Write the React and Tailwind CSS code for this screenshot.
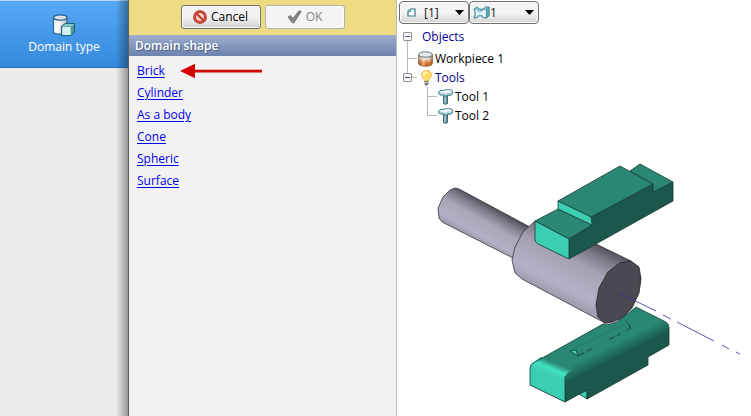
import React from "react";

const shapes = ["Brick", "Cylinder", "As a body", "Cone", "Spheric", "Surface"];

function DomainIcon() {
  return (
    <svg width="24" height="24" viewBox="0 0 24 24" aria-hidden="true">
      <defs>
        <linearGradient id="dcyl">
          <stop offset="0" stopColor="#fff" />
          <stop offset="0.5" stopColor="#f0f0f0" />
          <stop offset="1" stopColor="#b9b9b9" />
        </linearGradient>
      </defs>
      <path d="M1.5 4.5v14c0 3.500 13.500 3.500 13.500 0v-14z" fill="url(#dcyl)" stroke="#226c99" strokeWidth="1.200" />
      <ellipse cx="8.200" cy="4.500" rx="6.700" ry="2.600" fill="#dedede" stroke="#1d6594" strokeWidth="1.200" />
      <path d="M9.500 13.500l4-3h9v8.500l-3.500 3.500h-9.500z" fill="#d5eef0" stroke="#186276" strokeWidth="1.200" />
      <path d="M10 13.500l3.500-2.500h8.500l-3 2.500z" fill="#8ac9cb" />
      <path d="M19 13.500l3-2.500v8l-3 3z" fill="#4d9aa0" />
      <path d="M10 13.500h9v8" fill="none" stroke="#5aa5a8" strokeWidth="0.800" />
    </svg>
  );
}

function ForbidIcon() {
  return (
    <svg width="14" height="14" viewBox="0 0 14 14" aria-hidden="true">
      <circle cx="7" cy="7" r="5.400" fill="#f5d8d0" stroke="#8f2317" strokeWidth="2.800" />
      <circle cx="7" cy="7" r="5.400" fill="none" stroke="#d94c35" strokeWidth="1.800" />
      <path d="M3.200 3.200l7.600 7.600" stroke="#c83a27" strokeWidth="2.200" />
    </svg>
  );
}

function CheckIcon() {
  return (
    <svg width="15" height="14" viewBox="0 0 15 14" aria-hidden="true">
      <path d="M1 7l2.500-1.500 2.500 3L12 .8l2.200.6L6.800 13H5.500z" fill="#858585" stroke="#686868" strokeWidth="0.800" strokeLinejoin="round" />
    </svg>
  );
}

function SheetIcon() {
  return (
    <svg width="9" height="9" viewBox="0 0 9 9" aria-hidden="true">
      <path d="M1 3.500L3.500 1H8v7H1z" fill="#fff" stroke="#36788e" strokeWidth="1.200" />
      <path d="M1 3.800h2.700V1" fill="#a9d4de" stroke="#36788e" strokeWidth="0.700" />
    </svg>
  );
}

function SurfaceIcon() {
  return (
    <svg width="17" height="13" viewBox="0 0 17 13" aria-hidden="true">
      <path d="M4 1c2 3 6 3 8.500 0H16v8.500L13.500 12H10.500C9 9 5 9 3.500 12H1C2.500 9 2.500 6 1 3z" fill="#9bd0da" stroke="#3a8296" strokeLinejoin="round" />
      <path d="M1 3.300h2.500c2 2.700 5 2.700 7.500 0h2.500v8.200h-2.700c-2-3-5.500-3-7.500 0H1.500C3 9 3 6 1 3.300z" fill="#e4f5f8" stroke="#4b95a7" strokeWidth="0.800" />
      <path d="M13.500 3.300L16 1v8.500L13.500 12z" fill="#64a7b6" stroke="#3a8296" strokeWidth="0.600" />
    </svg>
  );
}

function WorkpieceIcon() {
  return (
    <svg width="15" height="16" viewBox="0 0 15 16" aria-hidden="true">
      <defs>
        <linearGradient id="wp" x2="0" y2="1">
          <stop offset="0.150" stopColor="#d8d2cd" />
          <stop offset="0.350" stopColor="#f1e3d8" />
          <stop offset="0.680" stopColor="#e2731c" />
          <stop offset="1" stopColor="#b94a06" />
        </linearGradient>
        <linearGradient id="wpShade">
          <stop offset="0" stopColor="#5e3019" stopOpacity="0.350" />
          <stop offset="0.350" stopColor="#fff" stopOpacity="0.450" />
          <stop offset="0.600" stopColor="#fff" stopOpacity="0" />
          <stop offset="1" stopColor="#5e3019" stopOpacity="0.600" />
        </linearGradient>
      </defs>
      <path d="M.7 3.500v9c0 3.700 13.600 3.700 13.600 0v-9z" fill="url(#wp)" stroke="#8d5535" strokeWidth="0.800" />
      <path d="M.7 3.500v9c0 3.700 13.600 3.700 13.600 0v-9z" fill="url(#wpShade)" />
      <ellipse cx="7.500" cy="3.500" rx="6.800" ry="2.700" fill="#e5e8e8" stroke="#547078" strokeWidth="0.900" />
    </svg>
  );
}

function BulbIcon() {
  return (
    <svg width="11" height="16" viewBox="0 0 11 16" aria-hidden="true">
      <path d="M3.500 11c0-2.300-3-3.300-3-6.200C.5 2.200 2.600.5 5.500.5s5 1.700 5 4.300c0 2.900-3 3.900-3 6.200z" fill="#ffdc68" stroke="#e3a938" strokeWidth="0.800" />
      <path d="M2.800 6c-.7-2 .3-4 2.600-4" stroke="#fff8d0" strokeWidth="1.800" fill="none" />
      <path d="M3.500 11h4v3l-1 1.500h-2l-1-1.500z" fill="#777" />
      <path d="M3.500 12.500h4" stroke="#ddd" strokeWidth="0.800" />
    </svg>
  );
}

function HammerIcon() {
  return (
    <svg width="15" height="16" viewBox="0 0 15 16" aria-hidden="true">
      <path d="M5.500 5h4v9.500c-1 1-3 1-4 0z" fill="#6e8f9a" stroke="#2e5f71" strokeWidth="0.900" />
      <path d="M7 7v7" stroke="#d1e2e6" />
      <path d="M.7 2.700L3 1.300l2 .5 2-1h6l1.300 1V5l-1.800 1.300H9.500L8.500 7H6L5 6H2L.7 5z" fill="#d5e9ed" stroke="#39788a" strokeLinejoin="round" />
      <path d="M1.500 2.800L3.200 2l2 .5 2-1h5.500l.8.700-1.500.9H9L7 4 5 3.300z" fill="#fff" />
      <path d="M1.500 5h3.700l1.300 1h2l1-.8h2.600l1.400-.8" stroke="#679daa" strokeWidth="0.800" fill="none" />
    </svg>
  );
}

function Combo({ label, value, icon, inset, iconInset }) {
  return (
    <div className="grid h-[23px] w-[70px] grid-cols-1 items-center rounded-sm border border-[#707070] bg-gradient-to-b from-[#f3f3f3] from-50% to-[#d5d5d5] shadow-[inset_0_0_0_1px_#fafafa]">
      <select aria-label={label} className={`col-start-1 row-start-1 h-[21px] w-full appearance-none bg-transparent ${inset} text-xs text-[#171717] outline-none`}>
        <option>{value}</option>
      </select>
      <span className={`pointer-events-none col-start-1 row-start-1 flex items-center justify-between pr-1 ${iconInset}`}>
        {icon}
        <svg width="9" height="5" viewBox="0 0 9 5" aria-hidden="true"><path d="M0 0h9L4.500 5z" fill="#000" /></svg>
      </span>
    </div>
  );
}

function Expander({ last }) {
  return (
    <svg width="14" height={last ? 19 : 25} viewBox={last ? "0 0 14 19" : "0 0 14 25"} className="shrink-0" aria-hidden="true">
      <path d={last ? "M4.500 0v5M9 9.500h5" : "M4.500 17v8"} stroke="#b8b8b8" fill="none" />
      <rect x="0.500" y={last ? 5.500 : 8.500} width="8" height="8" rx="0.500" fill="#f7f7f7" stroke="#929292" />
      <path d={last ? "M2 9.500h5" : "M2 12.500h5"} stroke="#315792" />
    </svg>
  );
}

function ObjectTree() {
  return (
    <ul className="pl-1.5 text-xs text-black">
      <li>
        <div className="flex h-[25px] items-center text-[#000095]"><Expander /><span className="pl-[5px]">Objects</span></div>
        <ul>
          <li className="flex h-[19px] items-center">
            <svg width="15" height="19" viewBox="0 0 15 19" aria-hidden="true"><path d="M4.500 0v19M5 9.500h9" stroke="#b8b8b8" /></svg>
            <WorkpieceIcon /><span className="pl-0.5">Workpiece 1</span>
          </li>
          <li>
            <div className="flex h-[19px] items-center text-[#000095]">
              <Expander last />
              <span className="flex w-[18px] justify-center"><BulbIcon /></span>
              <span>Tools</span>
            </div>
            <ul>
              {["Tool 1", "Tool 2"].map((name, i) => (
                <li key={name} className="flex h-[19px] items-center pl-6">
                  <svg width="11" height="19" viewBox="0 0 11 19" aria-hidden="true">
                    <path d={i === 0 ? "M.5 0v19M1 9.500h9" : "M.5 0v9.500h9.500"} stroke="#b8b8b8" fill="none" />
                  </svg>
                  <HammerIcon /><span className="pl-0.5">{name}</span>
                </li>
              ))}
            </ul>
          </li>
        </ul>
      </li>
    </ul>
  );
}

function Scene() {
  return (
    <svg viewBox="397 125 354 291" className="block w-full" role="img" aria-label="Workpiece between two tools">
      <defs>
        <linearGradient id="shaft" gradientUnits="userSpaceOnUse" x1="495" y1="208" x2="477" y2="240">
          <stop offset="0" stopColor="#504c57" />
          <stop offset="0.200" stopColor="#807b89" />
          <stop offset="0.450" stopColor="#aaa5b7" />
          <stop offset="0.850" stopColor="#b4afc4" />
          <stop offset="1" stopColor="#9f9aac" />
        </linearGradient>
        <linearGradient id="drum" gradientUnits="userSpaceOnUse" x1="595" y1="242" x2="565" y2="302">
          <stop offset="0" stopColor="#504c57" />
          <stop offset="0.180" stopColor="#807b89" />
          <stop offset="0.400" stopColor="#a6a1b3" />
          <stop offset="0.800" stopColor="#b5b0c6" />
          <stop offset="1" stopColor="#9f9aac" />
        </linearGradient>
        <linearGradient id="block" gradientUnits="userSpaceOnUse" x1="561" y1="371" x2="567" y2="383">
          <stop offset="0" stopColor="#298773" />
          <stop offset="1" stopColor="#1b584b" />
        </linearGradient>
        <linearGradient id="round" gradientUnits="userSpaceOnUse" x1="555" y1="363" x2="550" y2="375">
          <stop offset="0" stopColor="#298773" />
          <stop offset="0.500" stopColor="#40e3c0" />
          <stop offset="1" stopColor="#3bceb0" />
        </linearGradient>
      </defs>
      <g strokeLinejoin="round" strokeWidth="0.800">
        <path d="M455 188L459 189 530 227 513 258 442 222 439 218 438 208 443 197 450 190z" fill="url(#shaft)" />
        <path d="M530 227L459 189 455 188 450 190 443 197 438 208 439 218 442 222 513 258" fill="none" stroke="#37353d" />
        <path d="M535 221L631 261 605 323 522 279 515 273 512 260 515 247 523 232z" fill="url(#drum)" />
        <path d="M550 221L592 242 631 261 600 290z" fill="url(#drum)" />
        <path d="M592 242L631 261M605 323L522 279 515 273 512 260 515 247 523 232 535 221" fill="none" stroke="#37353d" />
        <path d="M631 261L639 267 641 279 639 293 632 308 622 318 613 322 605 323 598 317 596 305 599 288 608 272 620 263z" fill="#4b4851" stroke="#1f1e23" />

        <path d="M569 239L592 225 591 217 653 184V192L673 182V201L569 259z" fill="#1b584b" stroke="#173b34" />
        <path d="M535 221L558 209 592 225 569 239z" fill="#298773" stroke="#173b34" />
        <path d="M558 201L620 166 653 184 591 217z" fill="#298773" stroke="#173b34" />
        <path d="M630 171L640 164 673 182 653 192V184z" fill="#298773" stroke="#173b34" />
        <path d="M558 201L591 217 592 225 558 209z" fill="#3bceb0" stroke="#173b34" />
        <path d="M535 221L569 239V259L538 244Q535 242 535 240z" fill="#3bceb0" stroke="#173b34" />

        <path d="M636 307L666 322Q669 324 669 328V345L648 357V365L587 399V390L565 402 530 385V368Q530 364 535 362L603 324Q611 325 617 322z" fill="url(#block)" />
        <path d="M530 385V368Q530 364 535 361L541 357 572 370Q565 373 565 380V402z" fill="url(#round)" />
        <path d="M579 394L587 390V399z" fill="#3bceb0" stroke="#173b34" />
        <path d="M565 376V402L530 385V368Q530 364 535 362L603 324Q611 325 617 322L636 307 666 322Q669 324 669 328V345L648 357V365L587 399V390L565 402" fill="none" stroke="#173b34" />
        <path d="M570 351L576 350 578 356z" fill="#3bceb0" stroke="#143b30" />
        <path d="M578 356L631 328" fill="none" stroke="#14352d" strokeDasharray="7 3 6 19 6 3 4" />
        <path d="M571 350L623 325" fill="none" stroke="#237462" />
        <path d="M626 321L630 326 630 329" fill="none" stroke="#14352d" />
      </g>
      <path d="M619 293L656 311M663 315L671 319M677 322L714 341M722 345L729 349M736 352L740 354" stroke="#302ea0" strokeWidth="0.800" />
    </svg>
  );
}

export default function App() {
  return (
    <div className="flex min-h-screen bg-white font-['Open_Sans','Noto_Sans',sans-serif]">
      <aside className="grid w-32 shrink-0 grid-cols-[1fr_12px] bg-[#ebebeb]">
        <button className="col-span-2 col-start-1 row-start-1 flex h-[68px] flex-col items-center self-start border-t border-b border-t-[#b4d9fb] border-b-[#2472b8] bg-gradient-to-b from-[#57a8f5] to-[#348add] pt-3 text-xs text-white">
          <DomainIcon />
          <span className="leading-5">Domain type</span>
        </button>
        <span className="pointer-events-none z-10 col-start-2 row-start-1 bg-gradient-to-r from-transparent to-black/35" />
      </aside>

      <main className="w-[269px] shrink-0 border-x border-l-[#606060] border-r-[#b8bcc2] bg-[#f2f2f2]">
        <div className="flex h-[35px] justify-center gap-1 bg-[#eddc82] pt-[5px]">
          <button className="flex h-6 w-20 items-center justify-center gap-1 rounded-[3px] border border-[#707070] bg-gradient-to-b from-[#f2f2f2] from-50% to-[#d2d2d2] text-xs text-black shadow-[inset_0_0_0_1px_#fafafa]">
            <ForbidIcon />Cancel
          </button>
          <button disabled className="flex h-6 w-20 items-center justify-center gap-1 rounded-[3px] border border-[#adb2b5] bg-[#f4f4f4] text-xs text-[#838383] shadow-[inset_0_0_0_1px_#fafafa]">
            <CheckIcon />OK
          </button>
        </div>
        <h1 className="h-[21px] bg-gradient-to-b from-[#9eafd0] to-[#6d82ae] pl-1.5 text-xs leading-[21px] font-semibold text-white [text-shadow:1px_1px_1px_#465981]">
          Domain shape
        </h1>
        <ul className="px-2 pt-1 text-xs">
          {shapes.map((name, i) => (
            <li key={name} className="flex h-[22px] items-center gap-3.5">
              <a href="#" className="text-[#0000f0] underline decoration-1 underline-offset-2">{name}</a>
              {i === 0 && (
                <svg width="84" height="16" viewBox="0 0 84 16" aria-hidden="true">
                  <path d="M1 8L16 .7v6.100h67v2.800H16v5.700z" fill="#d40000" />
                </svg>
              )}
            </li>
          ))}
        </ul>
      </main>

      <section className="min-w-0 flex-1">
        <div className="flex pt-px pl-0.5">
          <Combo label="Sheet" value="[1]" icon={<SheetIcon />} inset="pl-6" iconInset="pl-[7px]" />
          <Combo label="Surface" value="1" icon={<SurfaceIcon />} inset="pl-5" iconInset="pl-[3px]" />
        </div>
        <ObjectTree />
        <Scene />
      </section>
    </div>
  );
}
